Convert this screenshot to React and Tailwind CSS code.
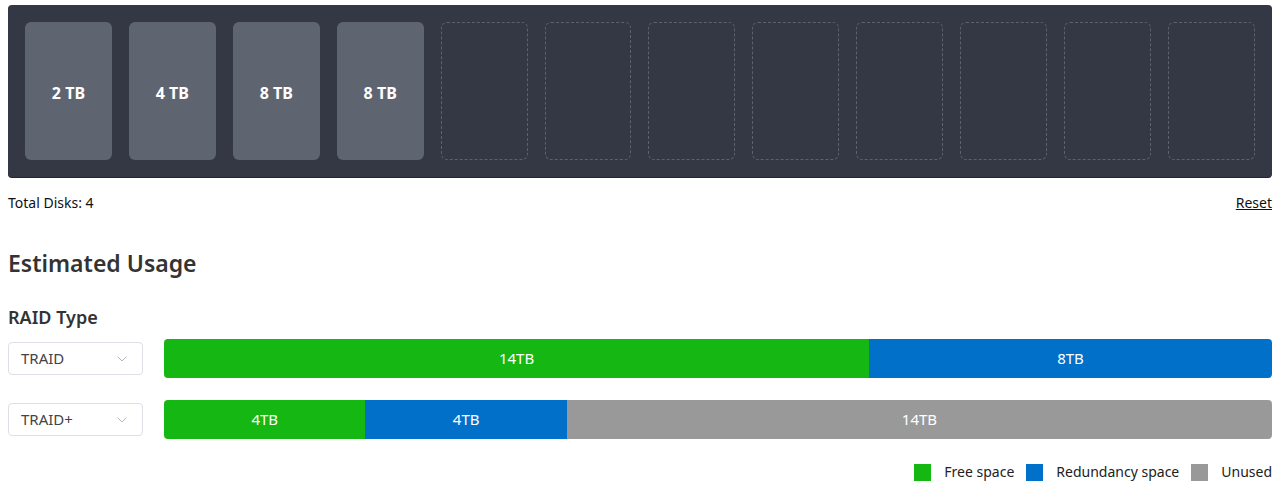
import React from 'react';
import { ChevronDown } from 'lucide-react';

const disks = ['2 TB', '4 TB', '8 TB', '8 TB', null, null, null, null, null, null, null, null];

const TOTAL = 22;

const rows = [
  {
    type: 'TRAID',
    parts: [
      { size: 14, color: 'bg-[#15b713]' },
      { size: 8, color: 'bg-[#0070c9]' },
    ],
  },
  {
    type: 'TRAID+',
    parts: [
      { size: 4, color: 'bg-[#15b713]' },
      { size: 4, color: 'bg-[#0070c9]' },
      { size: 14, color: 'bg-[#999999]' },
    ],
  },
];

const legend = [
  { label: 'Free space', color: 'bg-[#15b713]' },
  { label: 'Redundancy space', color: 'bg-[#0070c9]' },
  { label: 'Unused', color: 'bg-[#999999]' },
];

const App = () => {
  return (
    <div className="min-h-screen bg-white px-2 pt-[5px] font-['Noto_Sans',sans-serif] text-[#222]">
      {/* Disk bay */}
      <div className="grid grid-cols-12 gap-[17px] rounded bg-[#343844] p-[17px] shadow-[0_1px_0_#22252d]">
        {disks.map((d, i) =>
          d ? (
            <div
              key={i}
              className="flex h-[138px] items-center justify-center rounded-md bg-[#5f6570] pt-1 text-[16px] font-bold text-white"
            >
              {d}
            </div>
          ) : (
            <div
              key={i}
              className="h-[138px] rounded-md border border-dashed border-[#5c616c]"
            />
          )
        )}
      </div>

      <div className="mt-[16px] flex items-center justify-between text-sm leading-5 text-[#111]">
        <span>Total Disks: 4</span>
        <a href="#" className="underline">Reset</a>
      </div>

      <h2 className="mt-[34px] text-[23px] font-semibold leading-8 text-[#333]">Estimated Usage</h2>

      <h3 className="mt-[26px] text-[18px] font-semibold leading-6 text-[#333]">RAID Type</h3>

      <div className="mt-[10px] flex flex-col gap-[22px]">
        {rows.map((r) => (
          <div key={r.type} className="flex items-center gap-[21px]">
            <div className="flex h-[33px] w-[135px] shrink-0 items-center justify-between rounded border border-[#dcdfe6] bg-white pl-3 pr-3">
              <span className="text-[15px] text-[#444]">{r.type}</span>
              <ChevronDown className="h-4 w-4 text-[#b4b7bd]" strokeWidth={1.5} />
            </div>
            <div className="flex h-[39px] flex-1 overflow-hidden rounded">
              {r.parts.map((p, i) => (
                <div
                  key={i}
                  className={`flex items-center justify-center text-[15px] text-white ${p.color}`}
                  style={{ width: `${(p.size / TOTAL) * 100}%` }}
                >
                  {p.size}TB
                </div>
              ))}
            </div>
          </div>
        ))}
      </div>

      <div className="mt-[23px] flex items-center justify-end gap-3 text-sm text-[#222]">
        {legend.map((l) => (
          <div key={l.label} className="flex items-center gap-[13px]">
            <span className={`h-[17px] w-[17px] ${l.color}`} />
            <span>{l.label}</span>
          </div>
        ))}
      </div>
    </div>
  );
};

export default App;
